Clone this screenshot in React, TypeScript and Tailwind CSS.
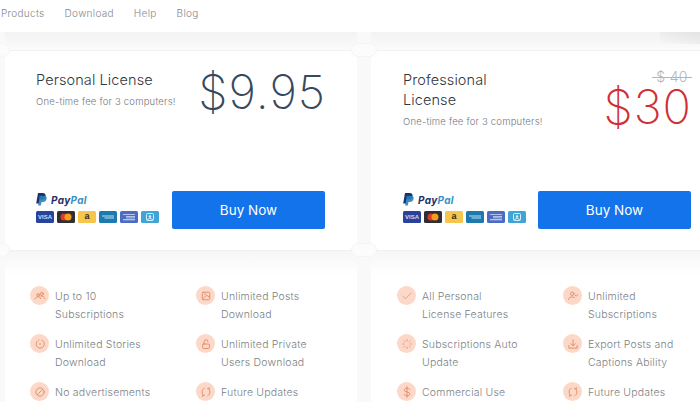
import React from "react";

const Pay = () => (
  <div className="flex items-center gap-[4px] h-[13px]">
    <svg width="11" height="13" viewBox="0 0 11 13">
      <path d="M2 0h4.600C9 0 10 1.400 9.500 3.400 9 5.600 7.400 6.500 5.400 6.500H3.800L3 10.500H0.200Z" fill="#1b2f6b" />
      <path d="M3.600 2.800h4.400c1.900 0 3 1.200 2.600 3.100-.4 2-1.900 3-3.800 3H5.500L4.800 12.600H2.200Z" fill="#2a7fb8" opacity="0.9" />
    </svg>
    <span className="text-[10px] leading-none font-bold italic [font-family:Inter,sans-serif] tracking-[0.3px]">
      <span className="text-[#1f2f66]">Pay</span>
      <span className="text-[#3a8fc4]">Pal</span>
    </span>
  </div>
);

const Cards = () => (
  <div className="flex gap-[3px] mt-[5px]">
    <div className="w-[18px] h-[12px] rounded-[1.500px] bg-[#27439c] flex items-center justify-center text-[6px] leading-none font-bold text-[#d5ddf3] [font-family:'Liberation_Sans',sans-serif]">VISA</div>
    <svg width="18" height="12" viewBox="0 0 18 12">
      <rect width="18" height="12" rx="1.500" fill="#2f2f33" />
      <circle cx="7" cy="6" r="3.500" fill="#e0392b" />
      <circle cx="11" cy="6" r="3.500" fill="#f59c1a" />
    </svg>
    <div className="w-[18px] h-[12px] rounded-[1.500px] bg-[#f6c64c] flex items-start justify-center pt-[1px] text-[9px] leading-[8px] font-bold text-[#33291a] [font-family:'Liberation_Sans',sans-serif]">a</div>
    <svg width="18" height="12" viewBox="0 0 18 12">
      <rect width="18" height="12" rx="1.500" fill="#1b7bb0" />
      <path d="M3 4.500h12v1H3zM5.500 6.500h9.500v1H5.500z" fill="#bfe0f0" />
    </svg>
    <svg width="18" height="12" viewBox="0 0 18 12">
      <rect width="18" height="12" rx="1.500" fill="#4c6cc4" />
      <path d="M3 3h12v.8H3zM6 5h9v.8H6zM6 6.500h9v.8H6zM3 8.200h12v1H3z" fill="#d5def5" />
    </svg>
    <svg width="18" height="12" viewBox="0 0 18 12">
      <rect width="18" height="12" rx="1.500" fill="#3fa4d6" />
      <rect x="5.500" y="2.500" width="7" height="7" rx="1" fill="none" stroke="#d7eff9" strokeWidth="1" />
      <circle cx="9" cy="5.500" r="1.300" fill="#d7eff9" />
      <path d="M6 9l3-2 3 2" stroke="#d7eff9" fill="none" />
    </svg>
  </div>
);

const stroke = { fill: "none", stroke: "#e08a62", strokeWidth: 1.200, strokeLinecap: "round" as const, strokeLinejoin: "round" as const };

const icons: Record<string, React.ReactNode> = {
  users: <><circle cx="5.500" cy="6.500" r="1.800" {...stroke} /><circle cx="10.500" cy="5" r="2" {...stroke} /><path d="M1.500 12c.5-2 2-3 4-3s3 1 3.500 2.500M9 8c2.500-.5 4.500.8 5.500 3.500" {...stroke} /></>,
  image: <><rect x="3" y="3" width="10" height="10" rx="1.500" {...stroke} /><path d="M3.500 12L9 7l4 3M6 5.500h1.500" {...stroke} /></>,
  story: <><path d="M10.500 3A5.500 5.500 0 1 1 4 4.500" {...stroke} /><circle cx="8" cy="8" r="1.100" fill="#e08a62" /><path d="M6 2.800l.6-.2" {...stroke} /></>,
  lock: <><rect x="3.500" y="8" width="9" height="6" rx="1" {...stroke} /><path d="M5.500 8V4.800a2.500 2.500 0 0 1 5 0" {...stroke} /></>,
  ban: <><circle cx="8" cy="8" r="5.500" {...stroke} /><path d="M4.500 11.500l7-7" {...stroke} /></>,
  refresh: <><path d="M5.500 3C2.500 4.500 1.800 8.500 4 12M10.500 13c3-1.500 3.700-5.500 1.500-9" {...stroke} /><path d="M10 3.500l2 .5.500-2M6 12.500L4 12l-.5 2" {...stroke} /></>,
  check: <path d="M2.500 8.500l3.500 3 7.500-7.500" {...stroke} strokeWidth={0.9} />,
  userCheck: <><circle cx="7" cy="5" r="2.300" {...stroke} /><path d="M2 12.500c.5-2.300 2.200-3.300 5-3.300 1.500 0 2.500.4 3.200 1M11 7l1.300 1.200L14.500 6" {...stroke} /></>,
  spin: <path d="M8 2v2M8 12v2M2 8h2M12 8h2M3.800 3.800l1.400 1.400M10.800 10.800l1.400 1.400M3.800 12.200l1.400-1.400M10.800 5.200l1.400-1.400" {...stroke} strokeWidth={1} />,
  download: <path d="M8 2.500v7.500M5 7.500l3 3 3-3M2.500 10v3.500h11V10" {...stroke} />,
  dollar: <path d="M11.500 4.500C11 3.300 9.500 3 8 3 6 3 4.500 3.800 4.500 5.400 4.500 9 11.800 7 11.800 10.800c0 1.500-1.700 2.200-3.800 2.200-1.700 0-3.300-.5-3.800-1.800M8 1v14" {...stroke} />,
};

const Feature = ({ icon, lines }: { icon: string; lines: string[] }) => (
  <div className="flex items-start gap-[6px] h-[48px]">
    <div className="w-[19px] h-[19px] mt-[1px] rounded-full bg-[#fbd8c8] flex items-center justify-center shrink-0">
      <svg width="12" height="12" viewBox="0 0 16 16">{icons[icon]}</svg>
    </div>
    <div className="mt-[3px] text-[10.500px] leading-[18px] font-light text-[#7c7f84] tracking-[0.2px]">
      {lines.map((l) => (<div key={l} className="whitespace-nowrap">{l}</div>))}
    </div>
  </div>
);

const Notch = ({ cls }: { cls: string }) => (
  <div className={`absolute h-[14px] rounded-full bg-[#fcfcfc] border border-[#f5f5f5] ${cls}`} />
);

const PriceCard = ({ pro }: { pro: boolean }) => (
  <div className="bg-white border-t border-[#f1f1f1] h-[200px]">
    <div className={`flex justify-between h-[140px] ${pro ? "pl-[32px] pr-[8px]" : "pl-[31px] pr-[31px]"}`}>
      <div className="pt-[19px]">
        <div className={`text-[14.500px] leading-[20px] font-light text-[#2f3740] tracking-[0.1px] ${pro ? "w-[100px]" : ""}`}>
          {pro ? "Professional License" : "Personal License"}
        </div>
        <div className="mt-[5px] text-[9.500px] leading-[13px] font-light text-[#75787e] tracking-[0.2px] whitespace-nowrap">One-time fee for 3 computers!</div>
      </div>
      {pro ? (
        <div className="flex flex-col items-end pt-[18px]">
          <div className="text-[14px] leading-[16px] font-light text-[#b2b5bb] line-through tracking-[0.3px]">&nbsp;$ 40&nbsp;</div>
          <div className="text-[47px] leading-[46px] font-[250] text-[#cf2f35] tracking-[1px] mt-[-1px]">$30</div>
        </div>
      ) : (
        <div className="text-[47px] leading-[46px] font-[250] text-[#35495f] tracking-[1px] pt-[18px]">$9.95</div>
      )}
    </div>
    <div className={`flex items-center justify-between ${pro ? "pl-[32px] pr-[9px]" : "pl-[31px] pr-[32px]"}`}>
      <div className="-mt-[4px]">
        <Pay />
        <Cards />
      </div>
      <button className="w-[153px] h-[38px] rounded-[2px] bg-[#1273eb] text-white text-[13.500px] font-normal">Buy Now</button>
    </div>
  </div>
);

const FeatureCard = ({ rows, offset }: { rows: [string, string[]][]; offset: string }) => (
  <div className="h-[152px] bg-gradient-to-b from-[#f6f6f6] via-white via-[16%] to-white border-t border-[#f1f1f1]">
    <div className={`grid grid-cols-[166px_1fr] pt-[34px] ${offset}`}>
      {rows.map(([i, l]) => (<Feature key={l.join()} icon={i} lines={l} />))}
    </div>
  </div>
);

export default function App() {
  return (
    <div className="relative w-[700px] h-[402px] overflow-hidden bg-[#f9f9f9] [font-family:Inter,sans-serif]">
      <div className="h-[32px] bg-white relative z-10 flex items-start pt-[6px] gap-[20px] pl-[1px] text-[10px] leading-[14px] font-light text-[#85888c] tracking-[0.3px]">
        <span>Products</span>
        <span>Download</span>
        <span>Help</span>
        <span>Blog</span>
      </div>
      <div className="h-[18px] grid grid-cols-[352px_1fr] gap-x-[14px] pl-[5px]">
        <div className="bg-gradient-to-b from-[#f3f3f3] to-[#fbfbfb]" />
        <div className="bg-gradient-to-b from-[#f3f3f3] to-[#fbfbfb]" />
      </div>
      <div className="grid grid-cols-[352px_1fr] gap-x-[14px] pl-[5px]">
        <PriceCard pro={false} />
        <PriceCard pro />
        <FeatureCard offset="pl-[25px]" rows={[
          ["users", ["Up to 10", "Subscriptions"]],
          ["image", ["Unlimited Posts", "Download"]],
          ["story", ["Unlimited Stories", "Download"]],
          ["lock", ["Unlimited Private", "Users Download"]],
          ["ban", ["No advertisements"]],
          ["refresh", ["Future Updates"]],
        ]} />
        <FeatureCard offset="pl-[26px]" rows={[
          ["check", ["All Personal", "License Features"]],
          ["userCheck", ["Unlimited", "Subscriptions"]],
          ["spin", ["Subscriptions Auto", "Update"]],
          ["download", ["Export Posts and", "Captions Ability"]],
          ["dollar", ["Commercial Use"]],
          ["refresh", ["Future Updates"]],
        ]} />
      </div>
      <div className="absolute right-0 top-[32px] w-[40px] h-[12px] bg-gradient-to-bl from-[#e4e4e4] to-transparent" />
      <Notch cls="left-[-4px] top-[43px] w-[14px]" />
      <Notch cls="left-[351px] top-[43px] w-[26px]" />
      <Notch cls="left-[-4px] top-[243px] w-[14px]" />
      <Notch cls="left-[351px] top-[243px] w-[26px]" />
    </div>
  );
}
